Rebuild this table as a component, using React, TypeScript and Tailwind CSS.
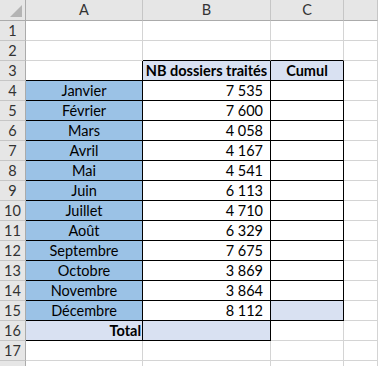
import React from "react";

type Cell = {
  text?: string;
  align?: "left" | "center" | "right";
  bold?: boolean;
  fill?: "blue" | "lavender";
  r?: boolean; // black right edge
  b?: boolean; // black bottom edge
};

const months: [string, string][] = [
  ["Janvier", "7 535"],
  ["Février", "7 600"],
  ["Mars", "4 058"],
  ["Avril", "4 167"],
  ["Mai", "4 541"],
  ["Juin", "6 113"],
  ["Juillet", "4 710"],
  ["Août", "6 329"],
  ["Septembre", "7 675"],
  ["Octobre", "3 869"],
  ["Novembre", "3 864"],
  ["Décembre", "8 112"],
];

// rows 1..18, columns A..D
function buildRows(): Cell[][] {
  const rows: Cell[][] = [];
  rows.push([{}, {}, {}, {}]);
  rows.push([{}, { b: true }, { b: true }, {}]);
  rows.push([
    { r: true, b: true },
    { text: "NB dossiers traités", align: "center", bold: true, fill: "lavender", r: true, b: true },
    { text: "Cumul", align: "center", bold: true, fill: "lavender", r: true, b: true },
    {},
  ]);
  months.forEach(([m, n], i) => {
    rows.push([
      { text: m, align: "center", fill: "blue", r: true, b: true },
      { text: n, align: "right", r: true, b: true },
      { r: true, b: true, fill: i === 11 ? "lavender" : undefined },
      {},
    ]);
  });
  rows.push([
    { text: "Total", align: "right", bold: true, fill: "lavender", r: true, b: true },
    { fill: "lavender", r: true, b: true },
    {},
    {},
  ]);
  rows.push([{}, {}, {}, {}]);
  rows.push([{}, {}, {}, {}]);
  return rows;
}

function cellClass(c: Cell) {
  const cls = ["flex items-center pt-[1px] border-r border-b overflow-hidden whitespace-nowrap"];
  cls.push(c.r ? "border-r-black" : "border-r-[#d4d4d4]");
  cls.push(c.b ? "border-b-black" : "border-b-[#d4d4d4]");
  if (c.fill === "blue") cls.push("bg-[#9bc2e6]");
  else if (c.fill === "lavender") cls.push("bg-[#d9e1f2]");
  else cls.push("bg-white");
  if (c.align === "center") cls.push("justify-center");
  if (c.align === "right") cls.push(c.bold ? "justify-end pr-[1px]" : "justify-end pr-[7px]");
  if (c.bold) cls.push("font-bold");
  return cls.join(" ");
}

export default function App() {
  const rows = buildRows();
  return (
    <div
      className="w-[378px] h-[366px] overflow-hidden bg-white text-[14.5px] text-black"
      style={{ fontFamily: "Lato, 'Liberation Sans', sans-serif" }}
    >
      <div className="grid grid-cols-[26px_117px_128px_73px_1fr] grid-rows-[21px_repeat(18,20px)]">
        {/* corner */}
        <div className="relative bg-[#e6e6e6] border-r border-b border-r-[#ababab] border-b-[#ababab]">
          <div className="absolute right-[3px] bottom-[3px] w-0 h-0 border-l-[12px] border-l-transparent border-b-[12px] border-b-[#b4b4b4]" />
        </div>
        {["A", "B", "C", ""].map((h, i) => (
          <div
            key={i}
            className="flex items-center justify-center bg-[#e6e6e6] border-r border-b border-r-[#c6c6c6] border-b-[#ababab] text-[#333]"
          >
            {h}
          </div>
        ))}
        {rows.map((row, ri) => (
          <React.Fragment key={ri}>
            <div className="flex items-center justify-center pt-[1px] bg-[#e6e6e6] border-r border-b border-r-[#ababab] border-b-[#c6c6c6] text-[#333]">
              {ri < 17 ? ri + 1 : ""}
            </div>
            {row.map((c, ci) => (
              <div key={ci} className={cellClass(c)}>
                {c.text}
              </div>
            ))}
          </React.Fragment>
        ))}
      </div>
    </div>
  );
}
